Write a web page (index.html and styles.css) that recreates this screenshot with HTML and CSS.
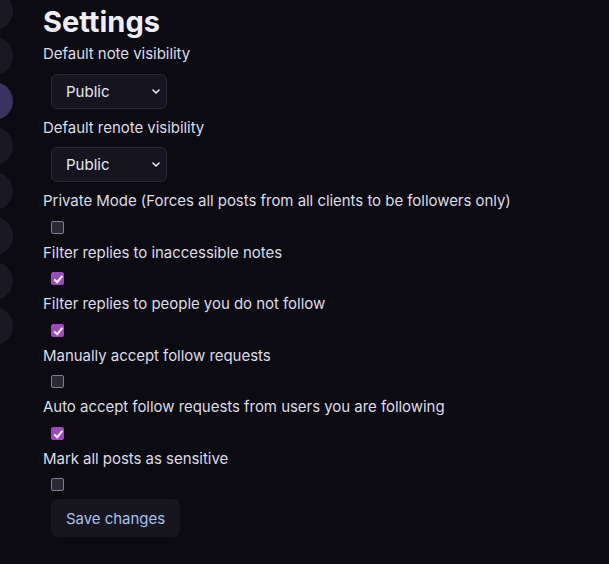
FILE: index.html
```html
<!DOCTYPE html>
<html lang="en">
<head>
<meta charset="utf-8">
<title>Settings</title>
<link rel="stylesheet" href="styles.css">
</head>
<body>
<div class="app">
  <nav class="rail">
    <span class="dot"></span>
    <span class="dot"></span>
    <span class="dot active"></span>
    <span class="dot"></span>
    <span class="dot"></span>
    <span class="dot"></span>
    <span class="dot"></span>
    <span class="dot"></span>
  </nav>
  <main class="content">
    <h1 class="title">Settings</h1>
    <form class="form">
      <div class="label">Default note visibility</div>
      <div class="field">
        <span class="select-wrap">
          <select class="select"><option>Public</option><option>Home</option><option>Followers</option></select>
          <svg class="chev" width="8" height="5" viewBox="0 0 8 5"><path d="M1 1l3 3 3-3" fill="none" stroke="#e8e8f2" stroke-width="1.6" stroke-linecap="round" stroke-linejoin="round"/></svg>
        </span>
      </div>
      <div class="label">Default renote visibility</div>
      <div class="field">
        <span class="select-wrap">
          <select class="select"><option>Public</option><option>Home</option><option>Followers</option></select>
          <svg class="chev" width="8" height="5" viewBox="0 0 8 5"><path d="M1 1l3 3 3-3" fill="none" stroke="#e8e8f2" stroke-width="1.6" stroke-linecap="round" stroke-linejoin="round"/></svg>
        </span>
      </div>
      <div class="label">Private Mode (Forces all posts from all clients to be followers only)</div>
      <div class="field"><input type="checkbox" class="check"></div>
      <div class="label">Filter replies to inaccessible notes</div>
      <div class="field"><input type="checkbox" class="check" checked></div>
      <div class="label">Filter replies to people you do not follow</div>
      <div class="field"><input type="checkbox" class="check" checked></div>
      <div class="label">Manually accept follow requests</div>
      <div class="field"><input type="checkbox" class="check"></div>
      <div class="label">Auto accept follow requests from users you are following</div>
      <div class="field"><input type="checkbox" class="check" checked></div>
      <div class="label">Mark all posts as sensitive</div>
      <div class="field"><input type="checkbox" class="check"></div>
      <div class="actions"><button type="button" class="btn">Save changes</button></div>
    </form>
  </main>
</div>
</body>
</html>
```
FILE: styles.css
```css
html, body {
  margin: 0;
  padding: 0;
  background: #0c0b11;
  height: 100%;
}
body {
  font-family: Inter, "Noto Sans", sans-serif;
  color: #dfdfea;
  font-size: 15px;
  line-height: 22.5px;
  letter-spacing: -0.04px;
  overflow: hidden;
}
.app {
  display: flex;
  align-items: flex-start;
}
.rail {
  display: flex;
  flex-direction: column;
  gap: 7px;
  width: 38px;
  margin-left: -25px;
  margin-top: -8px;
  flex-shrink: 0;
}
.dot {
  display: block;
  width: 38px;
  height: 38px;
  border-radius: 50%;
  background: #1a1923;
}
.dot.active {
  background: #393360;
}
.content {
  padding-left: 30px;
  flex: 1;
}
.title {
  margin: 0;
  font-size: 29px;
  line-height: 43px;
  font-weight: 700;
  letter-spacing: 0;
  color: #eeeef8;
}
.form {
  display: flex;
  flex-direction: column;
  align-items: flex-start;
}
.label {
  color: #dcdce8;
}
.field {
  padding: 8px;
  display: flex;
}
.select-wrap {
  position: relative;
  display: inline-block;
}
.select {
  appearance: none;
  -webkit-appearance: none;
  width: 116px;
  height: 35px;
  box-sizing: border-box;
  background: #16151f;
  border: 1px solid #2b2939;
  border-radius: 6px;
  color: #e8e8f2;
  font-family: Inter, "Noto Sans", sans-serif;
  font-size: 15px;
  padding: 0 24px 0 14px;
  margin: 0;
  outline: none;
}
.chev {
  position: absolute;
  right: 7px;
  top: 15px;
  pointer-events: none;
}
.check {
  appearance: none;
  -webkit-appearance: none;
  width: 13px;
  height: 13px;
  margin: 0;
  box-sizing: border-box;
  border: 1px solid #7d7c90;
  border-radius: 2px;
  background: #2a2934;
  position: relative;
}
.check:checked {
  background: #9d49bd;
  border-color: #9d49bd;
}
.check:checked::after {
  content: "";
  position: absolute;
  left: 3.5px;
  top: 1px;
  width: 3px;
  height: 6.5px;
  border: solid #ffffff;
  border-width: 0 2px 2px 0;
  transform: rotate(40deg);
}
.actions {
  padding: 0 8px;
}
.btn {
  background: #17161f;
  border: none;
  border-radius: 7px;
  color: #a7c1ea;
  font-family: Inter, "Noto Sans", sans-serif;
  font-size: 15px;
  letter-spacing: -0.04px;
  height: 38px;
  padding: 0 15px;
  margin: 0;
}
```
